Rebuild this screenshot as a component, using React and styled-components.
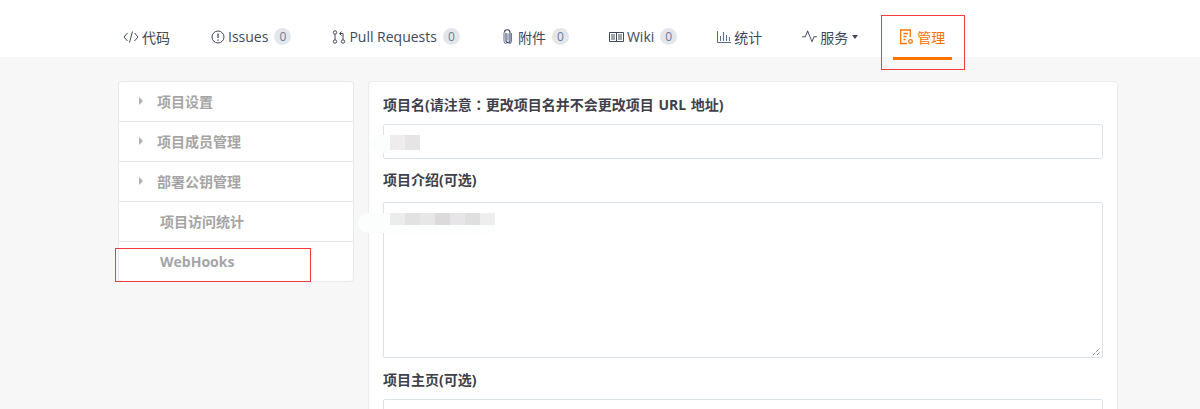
import styled, { createGlobalStyle } from 'styled-components';
import { GoPulse } from 'react-icons/go';

const FONT = `"Open Sans", "Noto Sans CJK SC", "Liberation Sans", sans-serif`;

const GlobalStyle = createGlobalStyle`
  html, body {
    margin: 0;
    height: 409px;
    overflow: hidden;
    background: #f7f7f7;
    font-family: ${FONT};
  }
  * { box-sizing: border-box; }
`;

const Header = styled.div`
  height: 57px;
  background: #fff;
`;

const Tabs = styled.div`
  display: flex;
  gap: 27px;
  padding-left: 116px;
  height: 60px;
`;

const Tab = styled.div`
  position: relative;
  display: flex;
  align-items: center;
  height: 60px;
  padding: 16px 7px 0;
  margin-left: ${(p) => p.$shift || 0}px;
  font-size: 14px;
  white-space: nowrap;
  color: ${(p) => (p.$active ? '#fe7300' : '#40485b')};
  border-bottom: 3px solid ${(p) => (p.$active ? '#fe7300' : 'transparent')};
  svg { flex: none; margin-right: 3px; }
`;

const Badge = styled.span`
  display: inline-block;
  width: 17px;
  height: 17px;
  line-height: 17px;
  margin-left: 6px;
  border-radius: 50%;
  background: #e3e6ea;
  color: #6a7aa5;
  font-size: 12px;
  text-align: center;
`;

const Caret = styled.span`
  margin-left: 4px;
  border-top: 4px solid #40485b;
  border-left: 3.5px solid transparent;
  border-right: 3.5px solid transparent;
`;

const RedBox = styled.div`
  position: absolute;
  border: 1px solid #f43a3a;
  pointer-events: none;
`;

const TabMark = styled(RedBox)`
  left: -12px;
  top: 15px;
  width: 84px;
  height: 55px;
`;

const HookMark = styled(RedBox)`
  left: -4px;
  top: 6px;
  width: 196px;
  height: 34px;
`;

const Body = styled.div`
  display: flex;
  align-items: flex-start;
  gap: 14px;
  height: 352px;
  overflow: hidden;
  padding: 24px 0 0 118px;
`;

const Side = styled.div`
  width: 236px;
  flex: none;
  background: #fff;
  border: 1px solid #e3e9ed;
  border-radius: 4px;
`;

const SideRow = styled.div`
  position: relative;
  display: flex;
  align-items: center;
  height: ${(p) => (p.$first ? '39px' : '40px')};
  padding-left: ${(p) => (p.$leaf ? '41px' : '20px')};
  padding-bottom: ${(p) => (p.$latin ? '0' : '2px')};
  border-top: ${(p) => (p.$first ? 'none' : '1px solid #e3e6ea')};
  font-size: 14px;
  font-weight: 700;
  color: #a5a5a5;
`;

const Arrow = styled.span`
  margin-right: 14px;
  border-left: 4px solid #b0b0b0;
  border-top: 4px solid transparent;
  border-bottom: 4px solid transparent;
`;

const Main = styled.div`
  width: 750px;
  height: 340px;
  flex: none;
  padding: 12px 14px 0;
  background: #fff;
  border: 1px solid #e9edf0;
  border-radius: 4px;
`;

const Label = styled.div`
  height: 20px;
  line-height: 20px;
  margin-bottom: ${(p) => p.$gap || 9}px;
  font-size: 14px;
  font-weight: 700;
  word-spacing: 1px;
  color: #40404a;
`;

const Colon = styled.span`
  font-family: "Noto Sans CJK TC", sans-serif;
`;

const Field = styled.div`
  position: relative;
  width: 720px;
  height: ${(p) => p.$h}px;
  margin-bottom: ${(p) => p.$gap || 11}px;
  background: #fff;
  border: 1px solid #dce3e8;
  border-radius: 2px;
`;

const Smear = styled.div`
  position: absolute;
  left: ${(p) => -p.$inset}px;
  top: 10px;
  display: flex;
  align-items: flex-start;
  height: ${(p) => p.$h}px;
  padding-left: ${(p) => p.$inset + 6}px;
  border-radius: 10px 0 0 10px;
  background: #fcfdfd;
`;

const Pixel = styled.span`
  width: 15px;
  height: ${(p) => p.$h}px;
  background: ${(p) => p.$c};
`;

const Grip = styled.svg`
  position: absolute;
  right: 1px;
  bottom: 1px;
`;

const stroke = { fill: 'none', stroke: '#40485b', strokeWidth: 1 };

const CodeIcon = () => (
  <svg width="16" height="14" viewBox="0 0 16 14" {...stroke}>
    <path d="M4.500 3L1 7l3.500 4M11.500 3L15 7l-3.500 4M9.500 1.500L6.500 12.500" />
  </svg>
);

const IssueIcon = () => (
  <svg width="14" height="14" viewBox="0 0 14 14" {...stroke}>
    <circle cx="7" cy="7" r="6" />
    <path d="M7 3.500v4.500M7 9.500v1.200" strokeWidth="1.300" />
  </svg>
);

const PullIcon = () => (
  <svg width="14" height="14" viewBox="0 0 14 14" {...stroke}>
    <circle cx="3" cy="2.500" r="1.700" />
    <circle cx="3" cy="11.500" r="1.700" />
    <circle cx="11" cy="11.500" r="1.700" />
    <path d="M3 4.200v5.600M11 9.800V3.500H8M9.500 1.500L7.500 3.500l2 2" />
  </svg>
);

const ClipIcon = () => (
  <svg width="14" height="15" viewBox="0 0 14 15" fill="none" stroke="#40485b" strokeWidth="1.100">
    <path d="M5 4v7.500a2 2 0 0 0 4 0V3.500a2.600 2.600 0 0 0-5.500 0" />
    <path d="M3 3.500v8a3.500 3.500 0 0 0 7.500 0V4M7 4.500v7" stroke="#6a7aa5" />
  </svg>
);

const BookIcon = () => (
  <svg width="15" height="14" viewBox="0 0 15 14" {...stroke}>
    <path d="M.500 2.500h14v9h-14zM7.500 2.500v9M2 5h4M2 7h4M2 9h4M9 5h4M9 7h4M9 9h4" />
  </svg>
);

const ChartIcon = () => (
  <svg width="14" height="14" viewBox="0 0 14 14" fill="none" stroke="#5a6a8a" strokeWidth="1">
    <path d="M.500 1v11.500H14M3.500 6v5M6.500 2v9M9.500 5v6M12.500 7v4" />
  </svg>
);

const ManageIcon = () => (
  <svg width="14" height="16" viewBox="0 0 14 16" fill="none" stroke="#fe7300" strokeWidth="1.300">
    <path d="M7 14.500H.700V1h9.600v7M3.500 4.500h4.500M3.500 7.500h3M3.500 10.500h2" />
    <circle cx="10.500" cy="12.500" r="1.800" />
  </svg>
);

const rows = ['项目设置', '项目成员管理', '部署公钥管理'];

export default function App() {
  return (
    <>
      <GlobalStyle />
      <Header>
        <Tabs>
          <Tab><CodeIcon />代码</Tab>
          <Tab><IssueIcon />Issues<Badge>0</Badge></Tab>
          <Tab><PullIcon />Pull Requests<Badge>0</Badge></Tab>
          <Tab><ClipIcon />附件<Badge>0</Badge></Tab>
          <Tab $shift={-1}><BookIcon />Wiki<Badge>0</Badge></Tab>
          <Tab $shift={-1}><ChartIcon />统计</Tab>
          <Tab $shift={-1}><GoPulse size={15} />服务<Caret /></Tab>
          <Tab $active $shift={1}><ManageIcon />管理<TabMark /></Tab>
        </Tabs>
      </Header>
      <Body>
        <Side>
          {rows.map((r, i) => (
            <SideRow key={r} $first={i === 0}><Arrow />{r}</SideRow>
          ))}
          <SideRow $leaf>项目访问统计</SideRow>
          <SideRow $leaf $latin>WebHooks<HookMark /></SideRow>
        </Side>
        <Main>
          <Label $gap={10}>项目名(请注意<Colon>：</Colon>更改项目名并不会更改项目 URL 地址)</Label>
          <Field $h={35}>
            <Smear $inset={14} $h={18}>
              <Pixel $h={15} $c="#eeeced" /><Pixel $h={15} $c="#e6e5e6" />
            </Smear>
          </Field>
          <Label $gap={12}>项目介绍(可选)</Label>
          <Field $h={156} $gap={12}>
            <Smear $inset={26} $h={20}>
              <Pixel $h={12} $c="#edecec" /><Pixel $h={12} $c="#e3e2e3" /><Pixel $h={12} $c="#e8e7e8" />
              <Pixel $h={12} $c="#dcdadb" /><Pixel $h={12} $c="#e7e5e7" /><Pixel $h={12} $c="#e0dfe0" />
              <Pixel $h={12} $c="#eeeeee" />
            </Smear>
            <Grip width="9" height="9" viewBox="0 0 9 9" stroke="#555" strokeDasharray="1 1">
              <path d="M1 8L8 1M5 8L8 5" />
            </Grip>
          </Field>
          <Label>项目主页(可选)</Label>
          <Field $h={40} />
        </Main>
      </Body>
    </>
  );
}
